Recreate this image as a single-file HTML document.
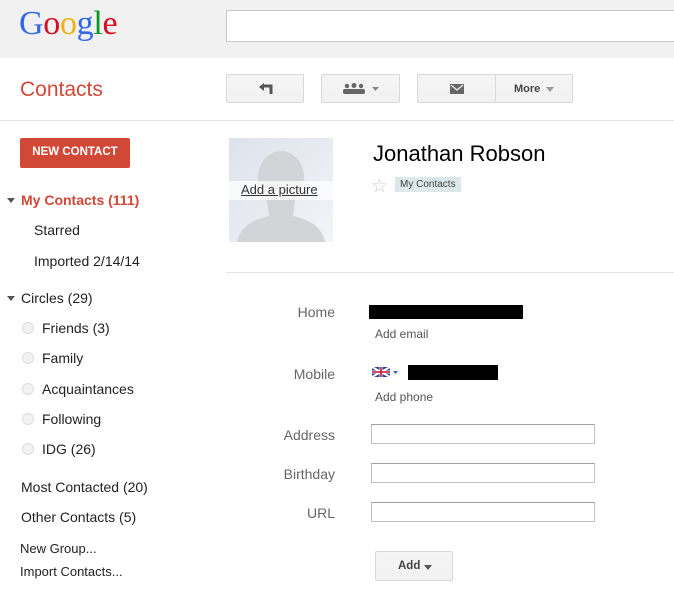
<!DOCTYPE html><html><head><style>
body{margin:0;width:674px;height:614px;overflow:hidden;background:#fff;font-family:"Liberation Sans",Arial,sans-serif;position:relative;color:#222}
div,span{position:absolute}
.hdr{left:0;top:0;width:674px;height:58px;background:#f1f1f1}
.btn{top:74px;height:29px;background:linear-gradient(#f5f5f5,#f1f1f1);border:1px solid #d8d8d8;border-radius:2px;box-sizing:border-box}
.nav{font-size:14px;color:#222}
.lbl{font-size:14px;color:#666;text-align:right;width:65px;left:270px}
.inp{left:371px;width:224px;height:20px;border:1px solid #c0c0c0;box-sizing:border-box;border-top-color:#a0a0a0}
.small{font-size:12px;color:#555;left:375px}
.rad{width:10px;height:10px;border-radius:50%;border:1px solid #ddd;background:#f2f2f2;left:22px}
.tri{width:0;height:0;border-left:4px solid transparent;border-right:4px solid transparent;border-top:5px solid #555}
</style></head><body>
<div class="hdr"></div>
<div style="left:19px;top:5px;font-family:'Liberation Serif',serif;font-size:34px;letter-spacing:-0.3px"><span style="position:static;color:#3369e8">G</span><span style="position:static;color:#d50f25">o</span><span style="position:static;color:#eeb211">o</span><span style="position:static;color:#3369e8">g</span><span style="position:static;color:#009925">l</span><span style="position:static;color:#d50f25">e</span></div>
<div style="left:226px;top:10px;width:460px;height:32px;background:#fff;border:1px solid #c8c8c8;box-sizing:border-box"></div>
<div style="left:20px;top:78px;font-size:21px;color:#d14836">Contacts</div>
<div class="btn" style="left:226px;width:78px"><svg style="position:absolute;left:31px;top:8px" width="16" height="12"><path d="M1 4L6 0V8Z" fill="#555"/><path d="M5 3H13V11" stroke="#555" stroke-width="3" fill="none"/></svg></div>
<div class="btn" style="left:321px;width:79px"><svg style="position:absolute;left:20px;top:8px" width="40" height="12"><circle cx="5" cy="3" r="2.2" fill="#666"/><circle cx="12" cy="2.5" r="2.5" fill="#666"/><circle cx="19" cy="3" r="2.2" fill="#666"/><rect x="1" y="6" width="22" height="5" rx="2" fill="#666"/><path d="M30 4h7l-3.5 4z" fill="#888"/></svg></div>
<div class="btn" style="left:417px;width:79px;border-right:none"><svg style="position:absolute;left:32px;top:9px" width="14" height="10"><rect width="14" height="10" fill="#666"/><path d="M1 1l6 5 6-5" stroke="#eee" stroke-width="1.3" fill="none"/></svg></div>
<div class="btn" style="left:495px;width:78px"><span style="left:18px;top:8px;font-size:11px;font-weight:bold;color:#444">More</span><div class="tri" style="left:50px;top:12px;border-top-color:#999"></div></div>
<div style="left:0;top:120px;width:674px;height:1px;background:#e5e5e5"></div>
<div style="left:20px;top:138px;width:110px;height:30px;background:#d14836;border-radius:2px;color:#fff;font-size:11.5px;font-weight:bold;text-align:center;line-height:29px;position:absolute">NEW CONTACT</div>
<div class="tri" style="left:7px;top:198px"></div>
<div class="nav" style="left:21px;top:192px;color:#d14836;font-weight:bold">My Contacts (111)</div>
<div class="nav" style="left:34px;top:222px">Starred</div>
<div class="nav" style="left:34px;top:253px">Imported 2/14/14</div>
<div class="tri" style="left:7px;top:296px"></div>
<div class="nav" style="left:21px;top:290px">Circles (29)</div>
<div class="rad" style="top:322px"></div><div class="nav" style="left:42px;top:320px">Friends (3)</div>
<div class="rad" style="top:352px"></div><div class="nav" style="left:42px;top:350px">Family</div>
<div class="rad" style="top:383px"></div><div class="nav" style="left:42px;top:381px">Acquaintances</div>
<div class="rad" style="top:413px"></div><div class="nav" style="left:42px;top:411px">Following</div>
<div class="rad" style="top:443px"></div><div class="nav" style="left:42px;top:441px">IDG (26)</div>
<div class="nav" style="left:21px;top:479px">Most Contacted (20)</div>
<div class="nav" style="left:21px;top:509px">Other Contacts (5)</div>
<div class="nav" style="left:20px;top:541px;font-size:13px">New Group...</div>
<div class="nav" style="left:20px;top:564px;font-size:13px">Import Contacts...</div>
<div style="left:229px;top:138px;width:104px;height:104px;background:linear-gradient(135deg,#dde2ea,#f2f4f8);overflow:hidden">
<svg width="104" height="104" style="position:absolute;left:0;top:0"><ellipse cx="52" cy="40" rx="23" ry="27" fill="#d2d4d8"/><path d="M38 62 L40 78 C20 82 10 92 8 104 H96 C94 92 84 82 64 78 L66 62Z" fill="#d2d4d8"/></svg>
<div style="left:0;top:43px;width:104px;height:19px;background:rgba(255,255,255,.75)"></div>
<span style="left:12px;top:44px;font-size:13px;color:#333;text-decoration:underline">Add a picture</span></div>
<div style="left:373px;top:141px;font-size:22px;color:#000">Jonathan Robson</div>
<div style="left:371px;top:175px;font-size:19px;color:#ccc">☆</div>
<div style="left:395px;top:177px;height:15px;padding:0 5px;background:#dde8ea;font-size:10px;color:#444;line-height:15px">My Contacts</div>
<div style="left:226px;top:272px;width:448px;height:1px;background:#e5e5e5"></div>
<div class="lbl" style="top:304px">Home</div>
<div style="left:369px;top:305px;width:154px;height:14px;background:#000"></div>
<div class="small" style="top:327px">Add email</div>
<div class="lbl" style="top:366px">Mobile</div>
<svg style="position:absolute;left:372px;top:367px" width="28" height="10"><rect width="18" height="10" fill="#2a3f8f"/><path d="M0 0L18 10M18 0L0 10" stroke="#fff" stroke-width="2"/><path d="M9 0V10M0 5H18" stroke="#fff" stroke-width="3"/><path d="M9 0V10M0 5H18" stroke="#c8102e" stroke-width="1.6"/><path d="M21 4h5l-2.5 3z" fill="#3b5bb5"/></svg>
<div style="left:408px;top:365px;width:90px;height:15px;background:#000"></div>
<div class="small" style="top:390px">Add phone</div>
<div class="lbl" style="top:427px">Address</div><div class="inp" style="top:424px"></div>
<div class="lbl" style="top:466px">Birthday</div><div class="inp" style="top:463px"></div>
<div class="lbl" style="top:505px">URL</div><div class="inp" style="top:502px"></div>
<div class="btn" style="left:375px;top:551px;width:78px;height:30px"><span style="left:22px;top:8px;font-size:11.5px;font-weight:bold;color:#444">Add</span><div class="tri" style="left:48px;top:13px;border-top-color:#555"></div></div>
</body></html>
